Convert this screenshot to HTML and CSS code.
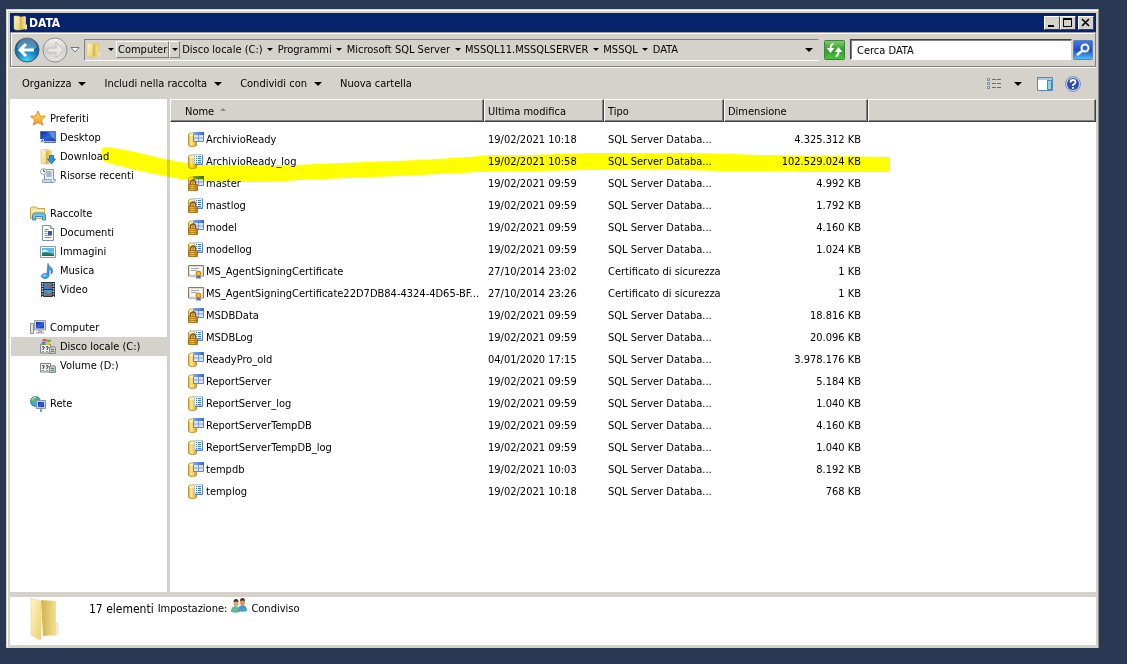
FILE: index.html
```html
<!DOCTYPE html>
<html lang="it">
<head>
<meta charset="utf-8">
<title>DATA</title>
<link rel="stylesheet" href="styles.css">
</head>
<body>
<svg class="sprite" aria-hidden="true">
  <defs>
    <linearGradient id="gold" x1="0" x2="1" y1="0" y2="0"><stop offset="0" stop-color="#e0b040"/><stop offset=".35" stop-color="#ffeb8c"/><stop offset="1" stop-color="#d6a02c"/></linearGradient>
    <linearGradient id="lockGold" x1="0" x2="1" y1="0" y2="0"><stop offset="0" stop-color="#c8860c"/><stop offset=".4" stop-color="#f8c840"/><stop offset="1" stop-color="#b87808"/></linearGradient>
    <linearGradient id="bar" x1="0" x2="1" y1="0" y2="0"><stop offset="0" stop-color="#84a8f4"/><stop offset="1" stop-color="#3a68d4"/></linearGradient>
    <linearGradient id="fold" x1="0" x2="1" y1="0" y2="1"><stop offset="0" stop-color="#fff6c0"/><stop offset="1" stop-color="#ecd070"/></linearGradient>
    <linearGradient id="foldIn" x1="0" x2="1" y1="0" y2="0"><stop offset="0" stop-color="#d0b050"/><stop offset="1" stop-color="#f7e491"/></linearGradient>
    <linearGradient id="screen" x1="0" x2="1" y1="0" y2="1"><stop offset="0" stop-color="#0a2a9c"/><stop offset=".5" stop-color="#2f62d8"/><stop offset="1" stop-color="#1238a8"/></linearGradient>
    <radialGradient id="orb" cx=".5" cy=".95" r=".95"><stop offset="0" stop-color="#4fd6f5"/><stop offset=".45" stop-color="#1683c4"/><stop offset="1" stop-color="#0b4a7c"/></radialGradient>
    <linearGradient id="orbOff" x1="0" x2="0" y1="0" y2="1"><stop offset="0" stop-color="#f4f4f2"/><stop offset=".5" stop-color="#cfcdc9"/><stop offset="1" stop-color="#e9e8e6"/></linearGradient>
    <linearGradient id="star" x1="0" x2="0" y1="0" y2="1"><stop offset="0" stop-color="#ffe36b"/><stop offset="1" stop-color="#f49a1c"/></linearGradient>
    <linearGradient id="lensBg" x1="0" x2="0" y1="0" y2="1"><stop offset="0" stop-color="#4a78e0"/><stop offset=".5" stop-color="#1c4cc4"/><stop offset="1" stop-color="#4fc6f2"/></linearGradient>
    <linearGradient id="greenBg" x1="0" x2="0" y1="0" y2="1"><stop offset="0" stop-color="#7ed36f"/><stop offset=".5" stop-color="#2c9b27"/><stop offset="1" stop-color="#4cc540"/></linearGradient>
  </defs>
  <symbol id="folder" viewBox="0 0 16 16">
    <path d="M7 2l6-1 1 1v12l-6 1z" fill="#e5c65c"/>
    <path d="M8 3l5-1v11l-5 1z" fill="url(#foldIn)"/>
    <path d="M2 1h5l1 1v13H4l-2-1z" fill="url(#fold)" stroke="#d8b650" stroke-width=".5"/>
    <path d="M14 9l1 1v4l-2 1z" fill="#eee6c0"/>
  </symbol>
  <symbol id="db-table" viewBox="0 0 16 16">
    <path d="M.5 2.500Q.5 1 4.500 1T8.500 2.500V13Q8.500 14.500 4.500 14.500T.5 13z" fill="url(#gold)" stroke="#bd9338"/>
    <ellipse cx="4.500" cy="2.700" rx="3.300" ry="1.200" fill="#fff3b8"/>
    <path d="M5.500.5h10v9h-10z" fill="#dce8fc" stroke="#5c82d0"/>
    <path d="M5 0h11v3H5z" fill="url(#bar)"/>
    <path d="M10.500 3v6.500M6 6h9.500" stroke="#7c9ee4"/>
  </symbol>
  <symbol id="db-log" viewBox="0 0 16 16">
    <path d="M.5 2.500Q.5 1 4.500 1T8.500 2.500V13Q8.500 14.500 4.500 14.500T.5 13z" fill="url(#gold)" stroke="#bd9338"/>
    <ellipse cx="4.500" cy="2.700" rx="3.300" ry="1.200" fill="#fff3b8"/>
    <path d="M6.500.5h8v9h-8z" fill="#f4f8ff" stroke="#b4c8ec"/>
    <path d="M14.500 1v9.500H7" fill="none" stroke="#5a7ec8"/>
    <path d="M8 2.500h1M10 2.500h3M8 4.500h1M10 4.500h3M8 6.500h1M10 6.500h3M8 8.500h1M10 8.500h3" stroke="#4472d0"/>
  </symbol>
  <symbol id="lock" viewBox="0 0 16 16">
    <path d="M2.500 9V6.500a2.500 2.500 0 0 1 5 0V9" fill="#f4d468" stroke="#80540c" stroke-width="1.400"/>
    <path d="M.5 8.500h9v6h-9z" fill="url(#lockGold)" stroke="#a06a0c" stroke-width=".8"/>
    <path d="M1 10.500h8M1 12.500h8" stroke="#a86c08" opacity=".6"/>
    <path d="M4.500 4.500h1v4h-1z" fill="#8a5c10"/>
  </symbol>
  <symbol id="cert" viewBox="0 0 16 16">
    <path d="M.5 1.500h15v10.500H.5z" fill="#fff" stroke="#8a7a70"/>
    <path d="M1.500 2.500h13v8.500h-13z" fill="none" stroke="#e4dccc"/>
    <path d="M3 4.500h8M3 6.500h6" stroke="#a8a8b8"/>
    <path d="M9 11l-1 4 2-1 1 1 1-1 1 1-1-4z" fill="#4468d0"/>
    <circle cx="10.500" cy="9.500" r="2.500" fill="#f2bc20" stroke="#b47c10"/>
  </symbol>
  <symbol id="fav" viewBox="0 0 16 16">
    <path d="M8 0l2.100 5 5.200.3-4 3.400 1.500 5.400L8 11.200l-4.800 2.900 1.500-5.400-4-3.400L5.900 5z" fill="url(#star)" stroke="#d9822b" stroke-width=".9"/>
  </symbol>
  <symbol id="desktop" viewBox="0 0 16 16">
    <path d="M.5 1.500h15v11H.5z" fill="url(#screen)" stroke="#5d7396"/>
    <path d="M8 2h7v7C11 9 12 5 8 2z" fill="#7fa6f0" opacity=".6"/>
    <path d="M1 11.500h14" stroke="#a9c4e8"/><path d="M0 9h4v4H0z" fill="#e8f0fa"/><path d="M1 12l2-2M1.500 10H3v1.500" stroke="#2b60c0" fill="none"/>
  </symbol>
  <symbol id="download" viewBox="0 0 16 16">
    <path d="M1 1l4-1 4 1v14H4l-3-1z" fill="url(#fold)" stroke="#cfaa48" stroke-width=".5"/>
    <path d="M6 2l6-1v12l-6 2z" fill="url(#foldIn)"/>
    <path d="M9.500 6.500h4V10h2l-4 5-4-5h2z" fill="#3292e0" stroke="#1b62b4" stroke-width=".8"/>
  </symbol>
  <symbol id="recent" viewBox="0 0 16 16">
    <path d="M4.500 1.500h9v10h2q0 3-2 3h-10q1-1 1-3z" fill="#e8eef4" stroke="#8496a8"/>
    <path d="M6.500 4h5M6.500 6h5M6.500 8h5" stroke="#5a87b8"/>
    <path d="M2.500 11.500h9v3h-9z" fill="#c8d6e4" stroke="#8496a8" stroke-width=".7"/>
    <circle cx="3.500" cy="3.500" r="3" fill="#f6f8fa" stroke="#98a4b0"/><path d="M3.500 1.500v2H5" fill="none" stroke="#556"/>
  </symbol>
  <symbol id="libs" viewBox="0 0 16 16">
    <path d="M.5 2.500L1.500 1h5l1 1.500h7v10H.5z" fill="#f8e08a" stroke="#cfa742"/>
    <path d="M1 4.500h13.500" stroke="#fff5c8"/>
    <path d="M2.500 14V10q0-3 3-3h7q3 0 3 3v4h-3v-3.500h-7V14z" fill="#72c6ec" stroke="#3787bc"/>
  </symbol>
  <symbol id="docs" viewBox="0 0 16 16">
    <path d="M2.500.5h8l3 3v12h-11z" fill="#fff" stroke="#7a92a8"/>
    <path d="M10.500.5v3h3" fill="#d4e2ee" stroke="#7a92a8"/>
    <path d="M4.500 4.500h4M4.500 6.500h3M4.500 8.500h3M4.500 10.500h7M4.500 12.500h7" stroke="#6d93c0"/><path d="M8 6h4v4H8z" fill="#355d94"/>
  </symbol>
  <symbol id="images" viewBox="0 0 16 16">
    <path d="M.5 2.500h15v11H.5z" fill="#fff" stroke="#8c9aa6"/>
    <path d="M2 4h12v8H2z" fill="#5bb8ea"/><path d="M2 7q3-3 6 0t6 0v1H2z" fill="#d4f0fa"/><path d="M2 9q5-2 12 1v2H2z" fill="#2c8069"/><path d="M2 11h12v1H2z" fill="#1b5c9c"/>
  </symbol>
  <symbol id="music" viewBox="0 0 16 16">
    <path d="M8 .5c0 3 5 3.500 4.500 8 0 1-.8 2-1.500 2.500.8-3-.5-4.500-2-5v6.500c0 2-2 3-4 3s-3.500-1-3.500-2.500 2-3 5.500-2.500z" fill="#3c9ce8" stroke="#1f6fbe" stroke-width=".7"/>
    <ellipse cx="4.500" cy="12.500" rx="1.600" ry="1" fill="#a6dafa"/>
  </symbol>
  <symbol id="video" viewBox="0 0 16 16">
    <path d="M1 0h14v15H1z" fill="#28323c"/><path d="M4 1h8v6H4z" fill="#3f86c0"/><path d="M4 8h8v6H4z" fill="#4b98cc"/>
    <path d="M6 2l3 2 3-3v5H7zM5 9l4 3 3-2v4H5z" fill="#b8483a" opacity=".7"/>
    <path d="M2.500 1v14M13.500 1v14" stroke="#e6eef2" stroke-width="1.400" stroke-dasharray="1.200 1.400"/>
  </symbol>
  <symbol id="pc" viewBox="0 0 16 16">
    <path d="M.5 3.500h3v10h-3z" fill="#e4e4e4" stroke="#8c8c8c"/>
    <path d="M4.500.5h11v9.500h-11z" fill="#d8d8dc" stroke="#9a9aa6"/><path d="M6 2h8v6.500H6z" fill="url(#screen)"/>
    <path d="M8 10h4v2h2v1.500H6V12h2z" fill="#b0b0b8"/>
  </symbol>
  <symbol id="drive" viewBox="0 0 16 16">
    <path d="M.5 5.500h10v8.500H.5z" fill="#eceeec" stroke="#7c8482"/>
    <path d="M2 8q1-1 2 0t-1 2v1M6 8q1-1 2 0T7 10v1M2.500 12.500h1M6.500 12.500h1" fill="none" stroke="#303838"/>
    <path d="M9.500 8.500l5-1 1 1v6h-6z" fill="#c4cac6" stroke="#848c88"/><path d="M11 10.500h3M11 12.500h3" stroke="#4c8a64"/>
  </symbol>
  <symbol id="flag" viewBox="0 0 16 16">
    <path d="M3 0q2-1 4 0L6 2.500q-2-1-4 0z" fill="#e4572e"/><path d="M7.500.2q2 1 4 0l-1 2.600q-2 1-4 0z" fill="#6db33f"/>
    <path d="M2 3q2-1 4 0L5 5.200q-2-1-4 0z" fill="#3f8ad8"/><path d="M6.500 3.200q2 1 4 0L9.500 5.500q-2 1-4 0z" fill="#f5b920"/>
  </symbol>
  <symbol id="net" viewBox="0 0 16 16">
    <circle cx="5.500" cy="5.500" r="5" fill="#38a4d8" stroke="#1c6ca8" stroke-width=".7"/>
    <path d="M2 3q3-3 5-1L5 5 2 6zM5 6l3 1-2 3z" fill="#68bf4c"/><path d="M1.500 4Q4 1 6 1" stroke="#c8f0fa" fill="none"/>
    <path d="M6.500 4.500h9v8h-9z" fill="#c8d0e0" stroke="#8a94a8"/><path d="M8 6h6v5H8z" fill="url(#screen)"/><path d="M10 13h2v3h-2z" fill="#5fb4a4"/>
  </symbol>
  <symbol id="people" viewBox="0 0 16 16">
    <path d="M0 14q0-6 4.500-6T9 14q-4 1.500-9 0z" fill="#66b894"/><ellipse cx="5" cy="5" rx="2.500" ry="3.200" fill="#dca474"/><path d="M2.500 4q0-3 2.500-3t2.500 3q-2.500-1-5 0z" fill="#4c3020"/>
    <path d="M7 13q0-6 4.500-6t4.500 6q-4 1.500-9 0z" fill="#4a9cc8"/><ellipse cx="11.500" cy="4.200" rx="2.500" ry="3.200" fill="#d49868"/><path d="M9 3q0-3 2.500-3T14 3q-2.500-1-5 0z" fill="#4c3020"/>
  </symbol>
</svg>

<div class="window">
  <header class="titlebar">
    <svg class="icon"><use href="#folder"/></svg>
    <h1 class="title">DATA</h1>
    <div class="caption-buttons">
      <button class="caption" aria-label="Riduci a icona"><svg viewBox="0 0 13 11"><path d="M3 8h6v2H3z"/></svg></button>
      <button class="caption" aria-label="Ingrandisci"><svg viewBox="0 0 13 11"><path d="M2 1h9v9H2zM3 3v6h7V3z" fill-rule="evenodd"/></svg></button>
      <button class="caption caption-close" aria-label="Chiudi"><svg viewBox="0 0 13 11"><path d="M3 2l7 7M10 2L3 9" stroke="#000" stroke-width="1.700"/></svg></button>
    </div>
  </header>

  <nav class="navbar" aria-label="Percorso">
    <div class="travel">
      <button class="plain" aria-label="Indietro"><svg width="26" height="26" viewBox="0 0 26 26"><circle cx="13" cy="13" r="12" fill="url(#orb)" stroke="#44576c"/><path d="M3 11a10 10 0 0 1 20 0Q13 14 3 11z" fill="#fff" opacity=".28"/><path d="M12 7l-6 6 6 6M7 13h13" fill="none" stroke="#fff" stroke-width="3"/></svg></button>
      <button class="plain" aria-label="Avanti"><svg width="26" height="26" viewBox="0 0 26 26"><circle cx="13" cy="13" r="12" fill="url(#orbOff)" stroke="#8f8f8f"/><path d="M14 7l6 6-6 6M19 13H6" fill="none" stroke="#e9e8e6" stroke-width="3"/><path d="M14 5l7 8-7 8v-5H6v-5h8z" fill="none" stroke="#c3c1bd"/></svg></button>
      <button class="plain" aria-label="Pagine recenti"><svg width="10" height="8" viewBox="0 0 10 8"><path d="M1 1.500h8L5 6z" fill="#fff" stroke="#6f7480"/></svg></button>
    </div>
    <div class="address">
      <svg class="icon"><use href="#folder"/></svg>
      <button class="arrow" aria-label="Radice"></button>
      <button class="crumb raised">Computer</button><button class="arrow raised" aria-label="Apri Computer"></button>
      <button class="crumb">Disco locale (C:)</button><button class="arrow" aria-label="Apri Disco locale"></button>
      <button class="crumb">Programmi</button><button class="arrow" aria-label="Apri Programmi"></button>
      <button class="crumb">Microsoft SQL Server</button><button class="arrow" aria-label="Apri Microsoft SQL Server"></button>
      <button class="crumb">MSSQL11.MSSQLSERVER</button><button class="arrow" aria-label="Apri MSSQL11"></button>
      <button class="crumb">MSSQL</button><button class="arrow" aria-label="Apri MSSQL"></button>
      <button class="crumb">DATA</button>
      <button class="arrow wide history" aria-label="Percorsi precedenti"></button>
    </div>
    <button class="plain refresh" aria-label="Aggiorna"><svg width="21" height="20" viewBox="0 0 21 20"><rect x=".5" y=".5" width="20" height="19" rx="1" fill="url(#greenBg)" stroke="#3f7f3c"/><path d="M9.500 4Q6.500 4 6.500 9M11.500 16q3 0 3-5" fill="none" stroke="#fff" stroke-width="2"/><path d="M2.500 8h8l-4 5zM10.500 12h8l-4-5z" fill="#fff"/></svg></button>
    <div class="search">
      <input class="search-box" type="text" aria-label="Cerca DATA" value="Cerca DATA">
      <button class="plain" aria-label="Cerca"><svg width="20" height="20" viewBox="0 0 20 20"><rect x=".5" y=".5" width="19" height="19" rx="1" fill="url(#lensBg)" stroke="#5f7fb8"/><circle cx="12" cy="8" r="3.500" fill="#3464cc" stroke="#fff" stroke-width="2"/><path d="M9 11l-5 4" stroke="#fff" stroke-width="2.500"/></svg></button>
    </div>
  </nav>

  <div class="toolbar">
    <button class="tool">Organizza<span class="caret"></span></button>
    <button class="tool">Includi nella raccolta<span class="caret"></span></button>
    <button class="tool">Condividi con<span class="caret"></span></button>
    <button class="tool">Nuova cartella</button>
    <div class="views">
      <button class="plain view-mode" aria-label="Visualizzazione"><svg width="16" height="14" viewBox="0 0 16 14"><path d="M1.500 1.500h2v2h-2zM1.500 5.500h2v2h-2zM1.500 9.500h2v2h-2z" fill="#fff" stroke="#7d86a0"/><path d="M6 2.500h4M11 2.500h4M6 6.500h4M11 6.500h4M6 10.500h4M11 10.500h4" stroke="#5f6a86"/></svg><span class="caret"></span></button>
      <button class="plain" aria-label="Riquadro di anteprima"><svg width="16" height="14" viewBox="0 0 16 14"><path d="M.5.5h15v13H.5z" fill="#fff" stroke="#5b87a8"/><path d="M1 1h14v2H1z" fill="#a9cbe2"/><path d="M10.500 3.500h4v9h-4z" fill="#8fd2ee" stroke="#3f8cb4"/></svg></button>
      <button class="plain" aria-label="Guida"><svg width="16" height="16" viewBox="0 0 16 16"><circle cx="8" cy="8" r="7.500" fill="#c8d4ee" stroke="#8090b8"/><circle cx="8" cy="8" r="6" fill="#2a4cb4"/><path d="M5.500 6.500Q5.500 4 8 4t2.500 2.300Q10.500 7.500 8 9v1M8 11v1.800" fill="none" stroke="#fff" stroke-width="1.800"/></svg></button>
    </div>
  </div>

  <div class="panes">
    <aside class="sidebar">
      <div class="group">
        <a class="place root" href="#"><svg class="icon"><use href="#fav"/></svg>Preferiti</a>
        <a class="place" href="#"><svg class="icon"><use href="#desktop"/></svg>Desktop</a>
        <a class="place" href="#"><svg class="icon"><use href="#download"/></svg>Download</a>
        <a class="place" href="#"><svg class="icon"><use href="#recent"/></svg>Risorse recenti</a>
      </div>
      <div class="group">
        <a class="place root" href="#"><svg class="icon"><use href="#libs"/></svg>Raccolte</a>
        <a class="place" href="#"><svg class="icon"><use href="#docs"/></svg>Documenti</a>
        <a class="place" href="#"><svg class="icon"><use href="#images"/></svg>Immagini</a>
        <a class="place" href="#"><svg class="icon"><use href="#music"/></svg>Musica</a>
        <a class="place" href="#"><svg class="icon"><use href="#video"/></svg>Video</a>
      </div>
      <div class="group">
        <a class="place root" href="#"><svg class="icon"><use href="#pc"/></svg>Computer</a>
        <a class="place selected" href="#"><svg class="icon"><use href="#drive"/><use href="#flag"/></svg>Disco locale (C:)</a>
        <a class="place" href="#"><svg class="icon"><use href="#drive"/></svg>Volume (D:)</a>
      </div>
      <div class="group">
        <a class="place root" href="#"><svg class="icon"><use href="#net"/></svg>Rete</a>
      </div>
    </aside>

    <main class="files">
      <table class="list">
        <colgroup><col class="c-name"><col class="c-date"><col class="c-type"><col class="c-size"><col></colgroup>
        <thead>
          <tr><th class="first">Nome<span class="sort"></span></th><th>Ultima modifica</th><th>Tipo</th><th>Dimensione</th><th></th></tr>
        </thead>
        <tbody>
          <tr><td><span class="file"><svg class="icon"><use href="#db-table"/></svg>ArchivioReady</span></td><td>19/02/2021 10:18</td><td>SQL Server Databa...</td><td class="size">4.325.312 KB</td><td></td></tr>
          <tr><td><span class="file"><svg class="icon"><use href="#db-log"/></svg>ArchivioReady_log</span></td><td>19/02/2021 10:58</td><td>SQL Server Databa...</td><td class="size">102.529.024 KB</td><td></td></tr>
          <tr><td><span class="file"><svg class="icon"><use href="#db-table"/><use href="#lock"/></svg>master</span></td><td>19/02/2021 09:59</td><td>SQL Server Databa...</td><td class="size">4.992 KB</td><td></td></tr>
          <tr><td><span class="file"><svg class="icon"><use href="#db-log"/><use href="#lock"/></svg>mastlog</span></td><td>19/02/2021 09:59</td><td>SQL Server Databa...</td><td class="size">1.792 KB</td><td></td></tr>
          <tr><td><span class="file"><svg class="icon"><use href="#db-table"/><use href="#lock"/></svg>model</span></td><td>19/02/2021 09:59</td><td>SQL Server Databa...</td><td class="size">4.160 KB</td><td></td></tr>
          <tr><td><span class="file"><svg class="icon"><use href="#db-log"/><use href="#lock"/></svg>modellog</span></td><td>19/02/2021 09:59</td><td>SQL Server Databa...</td><td class="size">1.024 KB</td><td></td></tr>
          <tr><td><span class="file"><svg class="icon"><use href="#cert"/></svg>MS_AgentSigningCertificate</span></td><td>27/10/2014 23:02</td><td>Certificato di sicurezza</td><td class="size">1 KB</td><td></td></tr>
          <tr><td><span class="file"><svg class="icon"><use href="#cert"/></svg>MS_AgentSigningCertificate22D7DB84-4324-4D65-BF...</span></td><td>27/10/2014 23:26</td><td>Certificato di sicurezza</td><td class="size">1 KB</td><td></td></tr>
          <tr><td><span class="file"><svg class="icon"><use href="#db-table"/><use href="#lock"/></svg>MSDBData</span></td><td>19/02/2021 09:59</td><td>SQL Server Databa...</td><td class="size">18.816 KB</td><td></td></tr>
          <tr><td><span class="file"><svg class="icon"><use href="#db-log"/><use href="#lock"/></svg>MSDBLog</span></td><td>19/02/2021 09:59</td><td>SQL Server Databa...</td><td class="size">20.096 KB</td><td></td></tr>
          <tr><td><span class="file"><svg class="icon"><use href="#db-table"/></svg>ReadyPro_old</span></td><td>04/01/2020 17:15</td><td>SQL Server Databa...</td><td class="size">3.978.176 KB</td><td></td></tr>
          <tr><td><span class="file"><svg class="icon"><use href="#db-table"/></svg>ReportServer</span></td><td>19/02/2021 09:59</td><td>SQL Server Databa...</td><td class="size">5.184 KB</td><td></td></tr>
          <tr><td><span class="file"><svg class="icon"><use href="#db-log"/></svg>ReportServer_log</span></td><td>19/02/2021 09:59</td><td>SQL Server Databa...</td><td class="size">1.040 KB</td><td></td></tr>
          <tr><td><span class="file"><svg class="icon"><use href="#db-table"/></svg>ReportServerTempDB</span></td><td>19/02/2021 09:59</td><td>SQL Server Databa...</td><td class="size">4.160 KB</td><td></td></tr>
          <tr><td><span class="file"><svg class="icon"><use href="#db-log"/></svg>ReportServerTempDB_log</span></td><td>19/02/2021 09:59</td><td>SQL Server Databa...</td><td class="size">1.040 KB</td><td></td></tr>
          <tr><td><span class="file"><svg class="icon"><use href="#db-table"/></svg>tempdb</span></td><td>19/02/2021 10:03</td><td>SQL Server Databa...</td><td class="size">8.192 KB</td><td></td></tr>
          <tr><td><span class="file"><svg class="icon"><use href="#db-log"/></svg>templog</span></td><td>19/02/2021 10:18</td><td>SQL Server Databa...</td><td class="size">768 KB</td><td></td></tr>
        </tbody>
      </table>
    </main>
    <svg class="marker" width="880" height="100" viewBox="10 99 880 100" aria-hidden="true"><path d="M102 148l6-1 12 2 20 4 20 5 20 4 20 3h95l45-2 80-3 50-3 20-2 40 0 60-2h110l60 2 70 1 60 1v15h-90l-10-1h-70l-70-2-60 1-110 2-80 4-100 4-30 2h-40l-50-3-20-4-20-4-20-5-16-4-3-7z" fill="#ff0"/></svg>
  </div>

  <footer class="details">
    <svg class="big-folder" viewBox="0 0 32 44"><path d="M11 3l15 1v24l1 10-14 1z" fill="url(#foldIn)"/><path d="M26 26l2 1v10l-3 2z" fill="#f3eedc" stroke="#d8cfa8" stroke-width=".6"/><path d="M1 1l9 3q1 1 1 3v34l-1 2-9-5z" fill="url(#fold)" stroke="#ecd688" stroke-width=".6"/></svg>
    <p class="summary"><span class="count">17 elementi</span> <span>Impostazione:</span> <svg class="icon people"><use href="#people"/></svg> <span>Condiviso</span></p>
  </footer>
</div>
</body>
</html>
```
FILE: styles.css
```css
:root {
  --face: #d5d2cc;
  --shadow: #808080;
  --dark: #404040;
}

* { box-sizing: border-box; }

body {
  margin: 0;
  min-height: 100vh;
  padding: 9px 28px 16px 6px;
  display: flex;
  background: #293853;
  color: #000;
  font: 11px/14px "DejaVu Sans Condensed", Tahoma, "DejaVu Sans", sans-serif;
}

button {
  font: inherit;
  color: inherit;
  padding: 0;
  border: 0;
  background: none;
  white-space: nowrap;
}

.sprite { position: absolute; width: 0; height: 0; }
.icon { width: 16px; height: 16px; flex: none; }
.plain { display: flex; align-items: center; }

.window {
  flex: 1;
  min-width: 0;
  display: flex;
  flex-direction: column;
  border: 1px solid var(--face);
  border-right-color: #8a8a8a;
  padding: 2px;
  background: var(--face);
  box-shadow: inset 1px 1px #fff;
}

.window > * { margin: 0 0 0 1px; }

/* Title bar */
.titlebar {
  display: flex;
  align-items: center;
  height: 19px;
  padding: 0 2px;
  background: #06246b;
  color: #fff;
}
.window > .titlebar { margin-top: 1px; }
.title { margin: 0 0 0 1px; font-size: 12px; line-height: 14px; font-weight: bold; }
.caption-buttons { display: flex; margin-left: auto; }
.caption {
  width: 16px;
  height: 14px;
  background: var(--face);
  border: 1px solid;
  border-color: #fff var(--dark) var(--dark) #fff;
}
.caption svg { display: block; width: 13px; height: 11px; }
.caption-close { margin-left: 2px; }

/* Navigation bar */
.navbar {
  display: flex;
  align-items: center;
  height: 35px;
  padding: 0 2px 0 3px;
  border: 1px solid var(--shadow);
  border-top-color: #9a9cb4;
  box-shadow: inset 1px 1px #fff, 0 1px #fff;
}
.travel { display: flex; align-items: center; gap: 2px; margin-right: 4px; }
.address {
  flex: 1;
  min-width: 0;
  display: flex;
  align-items: center;
  height: 22px;
  border: 1px solid;
  border-color: var(--shadow) var(--face) #fff var(--shadow);
}
.address > .icon { margin-right: 4px; }
.crumb { height: 17px; padding: 0 1px; border: 1px solid transparent; }
.arrow { width: 11px; height: 17px; display: grid; place-items: center; border: 1px solid transparent; }
.arrow::before {
  content: "";
  border: 3px solid transparent;
  border-top-color: #000;
  border-bottom-width: 0;
}
.raised { border-color: #fff var(--shadow) var(--shadow) #fff; }
.history { margin-left: auto; margin-right: 4px; }
.arrow.wide::before, .caret { border: 4px solid transparent; border-top-color: #000; border-bottom-width: 0; }
.refresh { margin: 0 5px; }
.search { display: flex; align-items: center; gap: 1px; width: 243px; }
.search-box {
  flex: 1;
  min-width: 0;
  height: 21px;
  padding: 1px 6px 0;
  font: inherit;
  color: #000;
  background: #fff;
  border: 1px solid;
  border-color: var(--dark) var(--face) #fff var(--dark);
  box-shadow: inset 1px 1px var(--shadow);
}

/* Toolbar */
.toolbar { display: flex; align-items: center; height: 32px; padding: 2px 15px 0 12px; gap: 18px; }
.tool { display: flex; align-items: center; gap: 7px; }
.views { display: flex; align-items: center; gap: 12px; margin-left: auto; }
.view-mode { gap: 12px; margin-right: 3px; }

/* Panes */
.panes { flex: 1; display: flex; gap: 3px; position: relative; }
.sidebar { width: 157px; flex: none; padding-top: 10px; background: #fff; }
.group { margin-bottom: 19px; }
.place {
  display: flex;
  align-items: center;
  gap: 4px;
  height: 19px;
  margin-left: 1px;
  padding-left: 29px;
  color: #000;
  text-decoration: none;
}
.root { padding-left: 19px; }
.selected { background: var(--face); }

.files { flex: 1; min-width: 0; background: #fff; }
.list { width: 100%; table-layout: fixed; border-collapse: separate; border-spacing: 0; }
.c-name { width: 314px; }
.c-date, .c-type { width: 120px; }
.c-size { width: 144px; }
.list th {
  height: 23px;
  padding: 2px 3px 0;
  text-align: left;
  font-weight: normal;
  background: var(--face);
  border: 1px solid;
  border-color: #fff var(--dark) var(--dark) #fff;
  box-shadow: inset -1px -1px var(--shadow);
}
.list .first { padding-left: 14px; }
.sort {
  display: inline-block;
  margin-left: 6px;
  vertical-align: 4px;
  border: 3px solid transparent;
  border-bottom-color: #8c8c8c;
  border-top-width: 0;
}
.list tbody::before { content: ""; display: block; height: 7px; }
.list td { height: 22px; padding: 0 4px; white-space: nowrap; }
.list td:first-child { padding: 0 0 0 18px; }
.list .size { padding-right: 7px; text-align: right; }
.file { display: flex; align-items: center; gap: 2px; }

/* Highlighter stroke drawn over both panes */
.marker { position: absolute; left: 0; top: 0; mix-blend-mode: multiply; pointer-events: none; }

/* Details pane */
.details { display: flex; height: 48px; padding-left: 20px; background: #fff; }
.window > .details { margin-top: 5px; }
.big-folder { width: 32px; height: 44px; }
.summary { display: flex; align-items: center; gap: 4px; height: 24px; margin: 0 0 0 27px; }
.count { font-size: 12px; }
.people { margin-bottom: 6px; }
```
